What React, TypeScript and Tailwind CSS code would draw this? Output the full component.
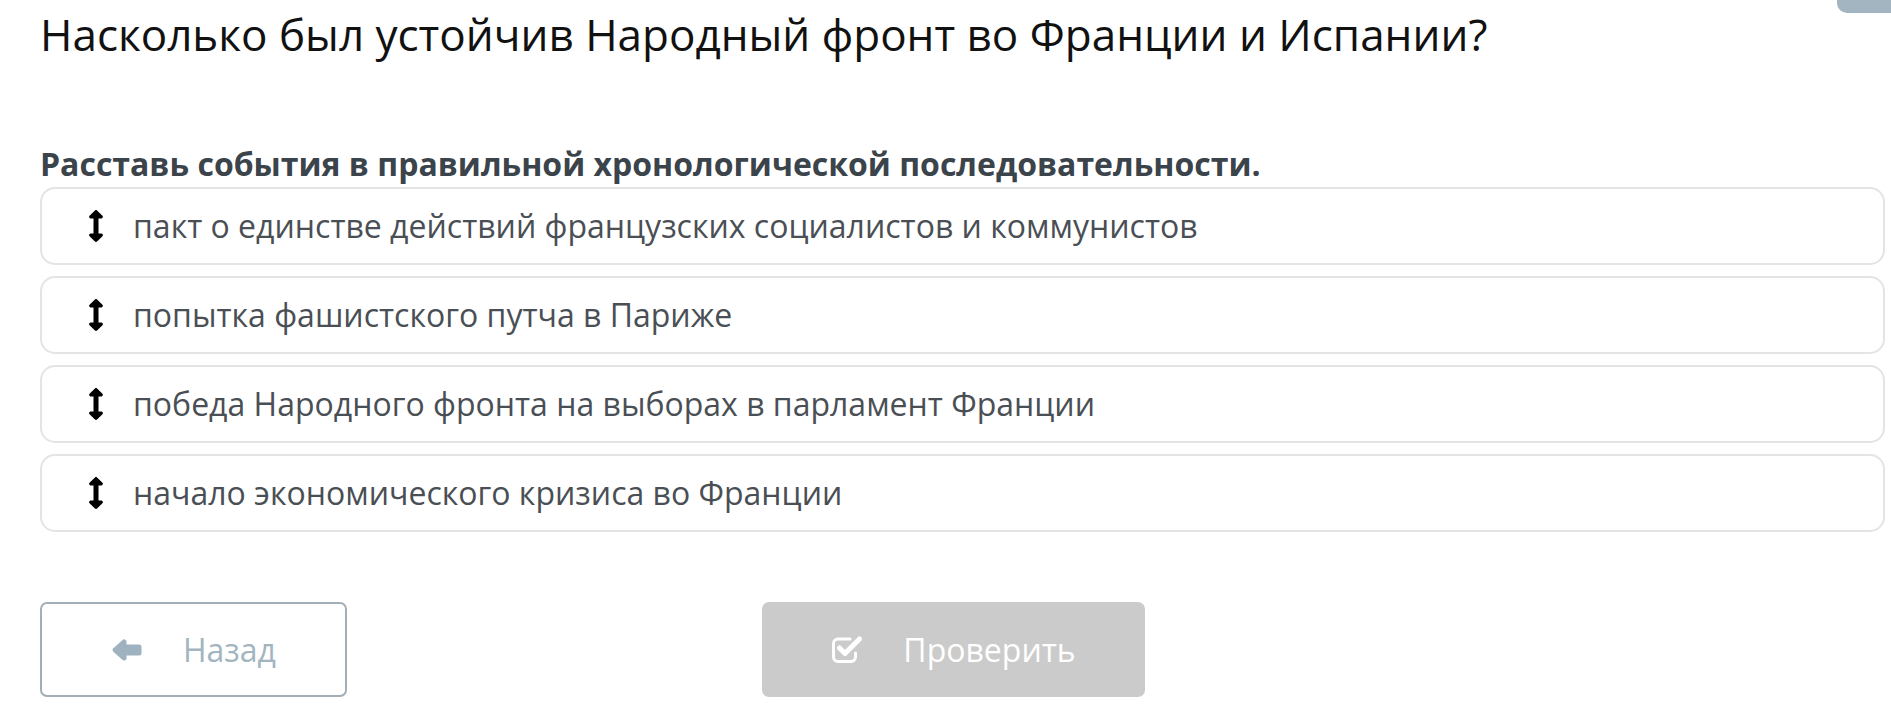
import React from "react";
import { FaArrowsAltV } from "react-icons/fa";

const items = [
  "пакт о единстве действий французских социалистов и коммунистов",
  "попытка фашистского путча в Париже",
  "победа Народного фронта на выборах в парламент Франции",
  "начало экономического кризиса во Франции",
];

function BackArrow() {
  return (
    <svg width="32" height="24" viewBox="0 0 32 24" className="text-[#9fb2bf]">
      <path
        d="M4 12 L13 4 L13 9 L28 9 L28 15 L13 15 L13 20 Z"
        fill="currentColor"
        stroke="currentColor"
        strokeWidth="5"
        strokeLinejoin="round"
      />
    </svg>
  );
}

function CheckIcon() {
  return (
    <svg width="32" height="29" viewBox="0 0 32 29" fill="none" className="text-white">
      <path
        d="M19 4 H7 a4.5 4.5 0 0 0 -4.5 4.5 V22 a4.5 4.5 0 0 0 4.5 4.5 H20 a4.5 4.5 0 0 0 4.5 -4.5 V18"
        stroke="currentColor"
        strokeWidth="3"
        strokeLinecap="round"
      />
      <path
        d="M8.5 13 L14 18.5 L28.5 4"
        stroke="currentColor"
        strokeWidth="5"
        strokeLinecap="round"
        strokeLinejoin="round"
      />
    </svg>
  );
}

export default function App() {
  return (
    <div
      className="relative w-[1891px] h-[716px] bg-white overflow-hidden"
      style={{ fontFamily: '"Open Sans", "Noto Sans", sans-serif' }}
    >
      <div className="absolute right-0 top-[-10px] w-[54px] h-[23px] rounded-bl-[10px] bg-[#a3b5c0]" />
      <div className="pl-[40px] pr-[6px]">
        <h1 className="pt-[6px] h-[130px] text-[44px] leading-[56px] text-[#111] font-normal">
          Насколько был устойчив Народный фронт во Франции и Испании?
        </h1>
        <p className="h-[57px] pt-[15px] text-[32px] leading-[38px] font-bold text-[#3b434b]">
          Расставь события в правильной хронологической последовательности.
        </p>
        <div className="flex flex-col gap-[11px]">
          {items.map((t) => (
            <div
              key={t}
              className="flex items-center h-[78px] border-2 border-[#e4e4e4] rounded-[15px] bg-white"
            >
              <div className="w-[91px] pl-[16px] flex justify-center">
                <FaArrowsAltV className="text-black w-[16px] h-[32px]" />
              </div>
              <span className="text-[32px] text-[#4a4f55] leading-[40px]">{t}</span>
            </div>
          ))}
        </div>
        <div className="flex mt-[70px]">
          <button className="w-[307px] h-[95px] border-2 border-[#a3afb7] rounded-[7px] flex items-center justify-center gap-[40px] bg-white">
            <BackArrow />
            <span className="text-[32px] text-[#a3b5c0] leading-[40px]">Назад</span>
          </button>
          <button className="ml-[415px] w-[383px] h-[95px] rounded-[7px] bg-[#cbcbcb] flex items-center justify-center gap-[40px]">
            <CheckIcon />
            <span className="text-[32px] text-white leading-[40px]">Проверить</span>
          </button>
        </div>
      </div>
    </div>
  );
}
